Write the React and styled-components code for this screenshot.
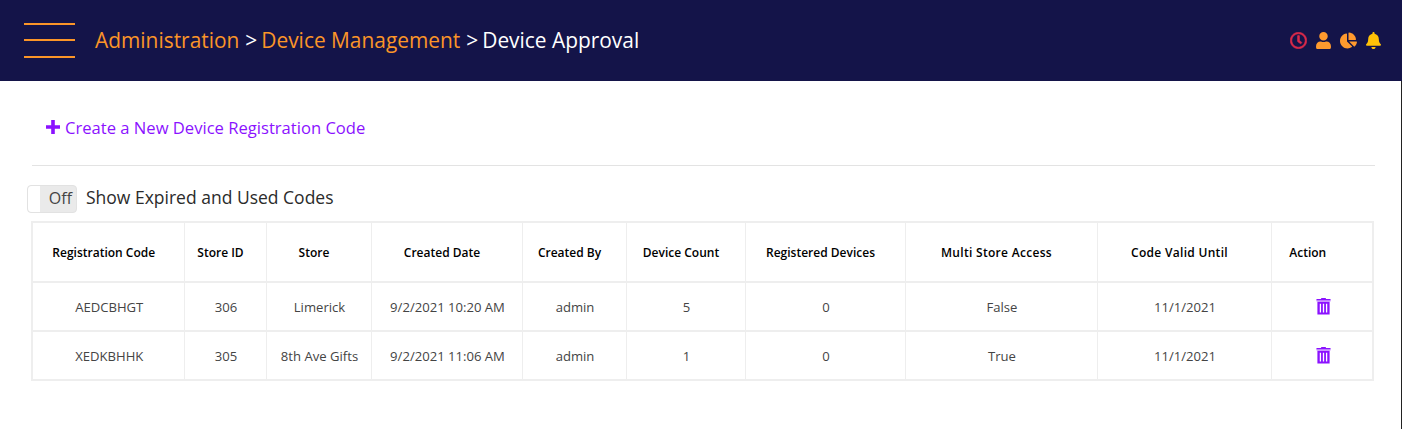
import React from 'react';
import styled, { createGlobalStyle } from 'styled-components';
import { FaRegClock, FaUser, FaChartPie, FaBell } from 'react-icons/fa';

const GlobalStyle = createGlobalStyle`
  html, body {
    margin: 0;
    padding: 0;
    background: #fff;
    font-family: "Open Sans", "Liberation Sans", sans-serif;
  }
`;

const Page = styled.div`
  width: 1402px;
  height: 429px;
  overflow: hidden;
  display: flex;
  flex-direction: column;
`;

const Header = styled.header`
  height: 81px;
  flex: none;
  box-sizing: border-box;
  background: #141449;
  display: flex;
  align-items: center;
  padding: 0 20px 1px 24px;
`;

const Burger = styled.div`
  width: 51px;
  height: 35px;
  display: flex;
  flex-direction: column;
  justify-content: space-between;
  margin-right: 20px;

  span {
    display: block;
    height: 2px;
    background: #fb9528;
  }
`;

const Crumbs = styled.div`
  flex: 1;
  display: flex;
  align-items: center;
  font-size: 20.9px;
  color: #fff;
  white-space: pre;
`;

const Crumb = styled.span`
  color: ${p => (p.$active ? '#fff' : '#fb9528')};
`;

const Separator = styled.span`
  margin: 0 4px 0 6px;
`;

const HeaderIcons = styled.div`
  display: flex;
  align-items: center;
  gap: 8px;
`;

const HeaderIcon = styled.span`
  display: flex;
  color: ${p => p.$color};
  font-size: 17px;

  svg {
    stroke: currentColor;
    stroke-width: ${p => p.$stroke || 0};
  }
`;

const Content = styled.main`
  flex: 1;
  border-right: 1px solid #222;
  padding: 0 27px 0 32px;
`;

const CreateRow = styled.div`
  height: 85px;
  width: 1343px;
  box-sizing: border-box;
  display: flex;
  align-items: center;
  gap: 5px;
  padding: 8px 0 0 14px;
  border-bottom: 1px solid #e3e3e3;
  color: #8b12ff;
  font-size: 16.6px;
`;

const ToggleRow = styled.div`
  display: flex;
  align-items: center;
  height: 28px;
  margin: 19px 0 8px -5px;
  gap: 9px;
`;

const Toggle = styled.div`
  width: 50px;
  height: 28px;
  box-sizing: border-box;
  background: #eaeaea;
  border: 1px solid #e2e2e2;
  border-radius: 4px;
  display: flex;
  align-items: center;
  justify-content: space-between;
  padding-right: 4px;
  font-size: 16px;
  color: #444;

  i {
    width: 12px;
    height: 26px;
    background: #fff;
    border-radius: 4px 0 0 4px;
  }

  span {
    padding-bottom: 3px;
  }
`;

const ToggleLabel = styled.span`
  font-size: 17.5px;
  color: #2b2b2b;
  margin-bottom: 5px;
`;

const Table = styled.table`
  width: 1341px;
  margin-left: -1px;
  table-layout: fixed;
  border-collapse: collapse;
  border: 2px solid #eee;
`;

const Th = styled.th`
  height: 58px;
  padding: 0 ${p => (p.$action ? '28px' : '9px')} 0 0;
  border: 1px solid #eee;
  border-bottom-width: 2px;
  font-size: 12px;
  font-weight: 560;
  letter-spacing: ${p => (p.$wide ? '0.3px' : '0')};
  color: #000;
  text-align: center;
`;

const Td = styled.td`
  height: 47px;
  padding: 0 0 0 ${p => (p.$action ? '4px' : '2px')};
  border: 1px solid #eee;
  border-bottom-width: 2px;
  font-size: 13.1px;
  color: #444;
  text-align: center;
`;

const TrashSvg = styled.svg`
  display: block;
  margin: 0 auto;
`;

const TrashIcon = () => (
  <TrashSvg width="15" height="17" viewBox="0 0 16 18">
    <path fill="#8b12ff" d="M5.5 0h5v1H15.5v1.6H.5V1h5z" />
    <path fill="#b975ff" d="M.5 2.6h15v1H.5z" />
    <path fill="#8b12ff" fillRule="evenodd" d="M1.5 4h13v13.5h-13zM4 6v9.5h1.4V6zm3.3 0v9.5h1.4V6zm3.3 0v9.5H12V6z" />
  </TrashSvg>
);

const PlusIcon = () => (
  <svg width="14" height="14" viewBox="0 0 14 14">
    <path fill="currentColor" d="M5.2 0h3.6v5.2H14v3.6H8.8V14H5.2V8.8H0V5.2h5.200z" />
  </svg>
);

const columns = [
  ['Registration Code', 152],
  ['Store ID', 82],
  ['Store', 105],
  ['Created Date', 151],
  ['Created By', 104],
  ['Device Count', 119],
  ['Registered Devices', 160],
  ['Multi Store Access', 192],
  ['Code Valid Until', 174],
  ['Action', 102],
];

const wideHeadings = ['Multi Store Access', 'Code Valid Until'];

const rows = [
  ['AEDCBHGT', '306', 'Limerick', '9/2/2021 10:20 AM', 'admin', '5', '0', 'False', '11/1/2021'],
  ['XEDKBHHK', '305', '8th Ave Gifts', '9/2/2021 11:06 AM', 'admin', '1', '0', 'True', '11/1/2021'],
];

export default function App() {
  return (
    <Page>
      <GlobalStyle />
      <Header>
        <Burger><span /><span /><span /></Burger>
        <Crumbs>
          <Crumb>Administration</Crumb>
          <Separator>&gt;</Separator>
          <Crumb>Device Management</Crumb>
          <Separator>&gt;</Separator>
          <Crumb $active>Device Approval</Crumb>
        </Crumbs>
        <HeaderIcons>
          <HeaderIcon $color="#dc2a4a" $stroke={18}><FaRegClock /></HeaderIcon>
          <HeaderIcon $color="#ff9a2e"><FaUser /></HeaderIcon>
          <HeaderIcon $color="#ff9a2e"><FaChartPie /></HeaderIcon>
          <HeaderIcon $color="#ffc107"><FaBell /></HeaderIcon>
        </HeaderIcons>
      </Header>
      <Content>
        <CreateRow><PlusIcon />Create a New Device Registration Code</CreateRow>
        <ToggleRow>
          <Toggle><i /><span>Off</span></Toggle>
          <ToggleLabel>Show Expired and Used Codes</ToggleLabel>
        </ToggleRow>
        <Table>
          <colgroup>
            {columns.map(([name, width]) => <col key={name} width={width} />)}
          </colgroup>
          <thead>
            <tr>
              {columns.map(([name]) => (
                <Th key={name} $action={name === 'Action'} $wide={wideHeadings.includes(name)}>{name}</Th>
              ))}
            </tr>
          </thead>
          <tbody>
            {rows.map(row => (
              <tr key={row[0]}>
                {row.map((cell, i) => <Td key={i}>{cell}</Td>)}
                <Td $action><TrashIcon /></Td>
              </tr>
            ))}
          </tbody>
        </Table>
      </Content>
    </Page>
  );
}
